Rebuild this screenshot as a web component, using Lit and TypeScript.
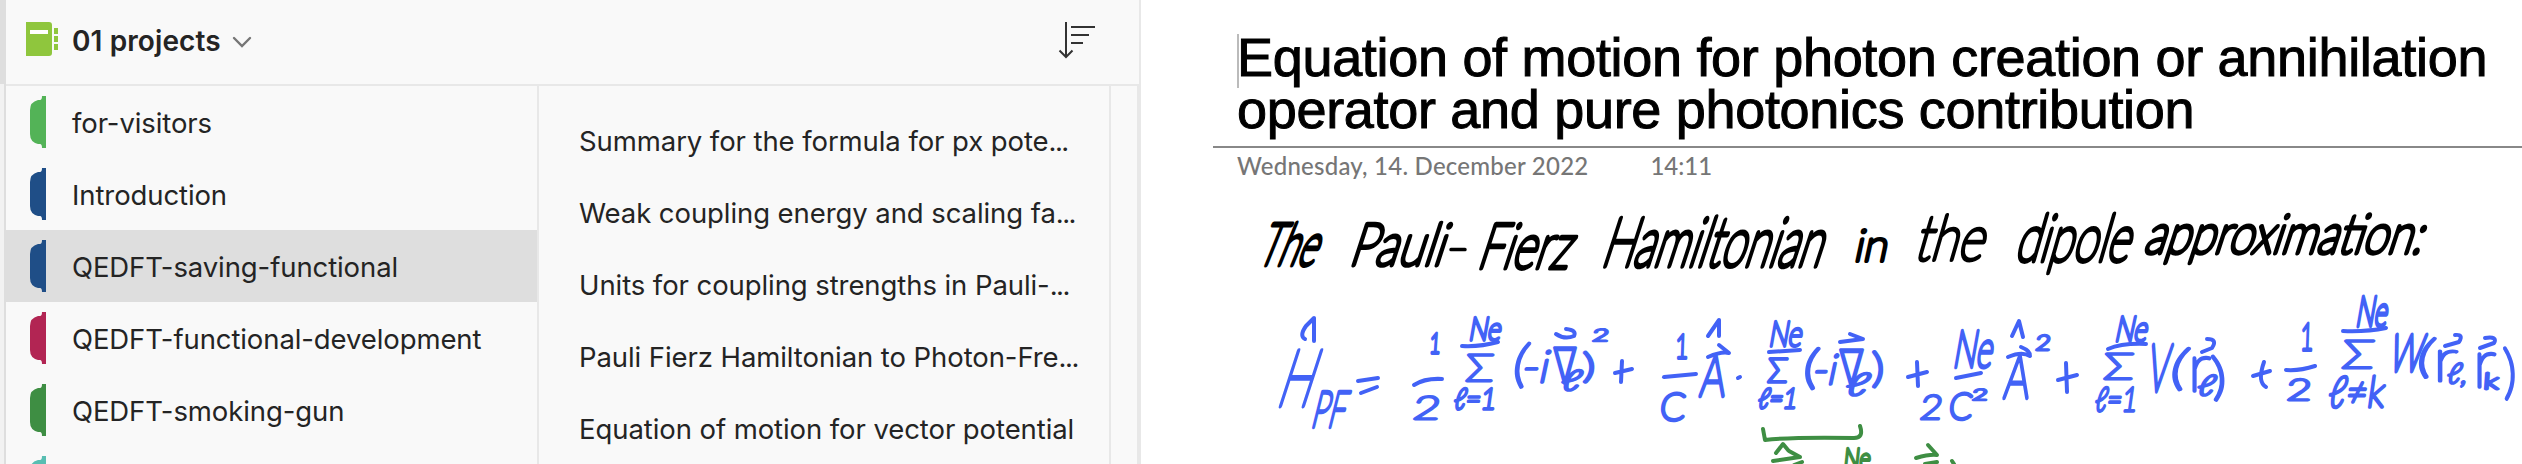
import { LitElement, html, svg, css } from "lit";
import { customElement, property } from "lit/decorators.js";

type Box = [number, number, number, number];
interface Glyph { t: string; box: Box; slant?: number; pen?: number; }

const BLUE: Glyph[] = [
  { t: "H", box: [1275, 349, 1309, 406], slant: 18, pen: 4.8 },
  { t: "PF", box: [1310, 391, 1343, 427], slant: 14, pen: 4.4 },
  { t: "1", box: [1429, 333, 1440, 353], slant: 4, pen: 3.8 },
  { t: "2", box: [1412, 396, 1439, 419], slant: 8 },
  { t: "Ne", box: [1468, 317, 1500, 340], slant: 10, pen: 3.8 },
  { t: "Σ", box: [1465, 354, 1493, 381], slant: 4 },
  { t: "ℓ=1", box: [1453, 388, 1495, 409], slant: 8, pen: 3.4 },
  { t: "(", box: [1511, 345, 1525, 381], slant: 10, pen: 3.6 },
  { t: "-i", box: [1520, 350, 1547, 382], slant: 12, pen: 3.4 },
  { t: "∇", box: [1553, 348, 1577, 383] },
  { t: "ℓ", box: [1560, 370, 1579, 390], slant: 12 },
  { t: ")", box: [1583, 353, 1595, 378], pen: 3.4 },
  { t: "2", box: [1592, 329, 1608, 341], slant: 8, pen: 2.6 },
  { t: "1", box: [1675, 334, 1688, 358], slant: 2, pen: 3.8 },
  { t: "C", box: [1659, 393, 1684, 420], slant: 6, pen: 3.8 },
  { t: "A", box: [1699, 354, 1724, 396], slant: 6, pen: 4.6 },
  { t: "Ne", box: [1768, 321, 1801, 346], slant: 10, pen: 3.8 },
  { t: "Σ", box: [1767, 358, 1787, 382], slant: 4, pen: 3.4 },
  { t: "ℓ=1", box: [1757, 388, 1796, 408], slant: 10, pen: 3.4 },
  { t: "(", box: [1802, 350, 1816, 383], slant: 8, pen: 3.6 },
  { t: "-i", box: [1811, 354, 1835, 384], slant: 12, pen: 3.4 },
  { t: "∇", box: [1839, 350, 1864, 385] },
  { t: "ℓ", box: [1844, 373, 1866, 395], slant: 14 },
  { t: ")", box: [1872, 353, 1884, 382], pen: 3.6 },
  { t: "Ne", box: [1952, 330, 1991, 367], slant: 10, pen: 4.6 },
  { t: "2", box: [1919, 395, 1941, 419], slant: 8, pen: 3.2 },
  { t: "C", box: [1948, 393, 1971, 419], slant: 6, pen: 3.8 },
  { t: "2", box: [1972, 389, 1987, 400], slant: 6, pen: 2.6 },
  { t: "A", box: [2003, 354, 2028, 398], slant: 6, pen: 4.6 },
  { t: "2", box: [2035, 335, 2050, 350], slant: 6 },
  { t: "Ne", box: [2114, 316, 2146, 341], slant: 12, pen: 4 },
  { t: "Σ", box: [2103, 353, 2133, 379], slant: 4 },
  { t: "ℓ=1", box: [2094, 387, 2136, 411], slant: 8, pen: 3.4 },
  { t: "V", box: [2146, 344, 2167, 391], slant: 8, pen: 5.4 },
  { t: "(", box: [2168, 350, 2184, 384], slant: 12, pen: 3.4 },
  { t: "r", box: [2188, 342, 2211, 391], pen: 3.4 },
  { t: "ℓ", box: [2196, 375, 2213, 395], slant: 12 },
  { t: ")", box: [2213, 358, 2227, 394], slant: -4, pen: 3.6 },
  { t: "1", box: [2300, 323, 2313, 350], slant: 2, pen: 4 },
  { t: "2", box: [2286, 379, 2311, 400], slant: 4 },
  { t: "Ne", box: [2355, 296, 2386, 326], slant: 10, pen: 4.8 },
  { t: "Σ", box: [2341, 340, 2373, 368], slant: 6 },
  { t: "ℓ≠k", box: [2327, 376, 2383, 407], slant: 8, pen: 3.6 },
  { t: "W", box: [2388, 334, 2420, 371], slant: 12, pen: 5 },
  { t: "(", box: [2415, 340, 2430, 372], slant: 12, pen: 3.4 },
  { t: "r", box: [2433, 338, 2458, 381] },
  { t: "ℓ,", box: [2446, 363, 2466, 383], slant: 10 },
  { t: "r", box: [2473, 338, 2496, 387], pen: 3.4 },
  { t: "k", box: [2483, 373, 2498, 389], slant: 4 },
  { t: ")", box: [2504, 350, 2517, 392], slant: -2, pen: 3.8 },
];

// Fraction bars, summation bars, hats, arrows and operators.
const BLUE_MARKS = [
  "M1305 339Q1299 336 1306 326L1314 318L1314 341", "M1358 381L1378 378M1361 393L1377 387",
  "M1414 385Q1425 378 1442 379", "M1462 346Q1480 347 1498 342",
  "M1556 334Q1565 340 1574 336Q1577 330 1566 329", "M1615 373L1632 369M1622 361L1621 382",
  "M1664 377L1696 374", "M1708 336L1719 320L1719 336", "M1708 357Q1722 351 1729 353L1719 345",
  "M1738 378L1740 377", "M1769 352L1800 350", "M1840 342L1863 339L1850 334",
  "M1908 377L1927 372M1917 362L1918 386", "M1956 378L1981 373",
  "M2012 336L2019 321L2023 337", "M2008 357Q2022 351 2030 356Q2031 351 2021 347",
  "M2058 380L2077 375M2066 363L2067 392", "M2108 349Q2122 343 2146 344",
  "M2207 339Q2218 339 2212 348L2202 352", "M2253 376L2270 371M2264 362Q2257 382 2266 387",
  "M2286 370Q2300 371 2315 366", "M2343 331Q2366 332 2386 328",
  "M2455 335Q2464 334 2459 342L2445 346", "M2485 338Q2498 336 2494 343L2480 348",
];

const GREEN_MARKS = [
  "M1763 429L1765 440Q1790 437 1854 438Q1864 438 1860 426",
  "M1776 453L1783 444L1788 450", "M1773 461L1800 457L1789 451", "M1794 465L1802 462",
  "M1916 458Q1930 454 1937 455L1928 445", "M1925 464L1937 462", "M1952 461L1954 464",
];

const BLACK: Glyph[] = [
  { t: "The", box: [1256, 223, 1314, 265], slant: 22, pen: 5.2 },
  { t: "Pauli", box: [1348, 223, 1442, 265], slant: 18, pen: 4.8 },
  { t: "-", box: [1446, 222, 1470, 268] },
  { t: "Fierz", box: [1476, 223, 1568, 268], slant: 18, pen: 5 },
  { t: "Hamiltonian", box: [1600, 217, 1820, 266], slant: 18, pen: 5.4 },
  { t: "in", box: [1853, 229, 1886, 261], slant: 12, pen: 4 },
  { t: "the", box: [1913, 215, 1982, 260], slant: 16, pen: 4.2 },
  { t: "dipole", box: [2014, 214, 2128, 261], slant: 16, pen: 5 },
  { t: "approximation:", box: [2143, 214, 2421, 253], slant: 18, pen: 4.8 },
];

function glyphs(list: Glyph[]) {
  return list.map(({ t, box: [x0, y0, x1, y1], slant = 0, pen = 3 }) => svg`
    <text transform="translate(${x0} ${y1}) skewX(${-slant})" font-size=${((y1 - y0) / 0.72).toFixed(1)}
      stroke-width=${pen} textLength=${x1 - x0} lengthAdjust="spacingAndGlyphs">${t}</text>`);
}

@customElement("ink-canvas")
class InkCanvas extends LitElement {
  static styles = css`
    :host { display: block; flex: 1; min-height: 0; }
    svg { display: block; }
    text { font-family: Lato, "DejaVu Sans", sans-serif; font-weight: 100; }
    g { stroke-linecap: round; stroke-linejoin: round; }
    path { fill: none; }
    .black { fill: #000; stroke: #000; }
    .blue { fill: #4262f6; stroke: #4262f6; }
    .green { fill: #3e8e43; stroke: #3e8e43; }
    .blue path, .green path { stroke-width: 4px; }
  `;
  render() {
    return html`<svg width="1381" height="284" viewBox="1141 180 1381 284">
      <g class="black">${glyphs(BLACK)}</g>
      <g class="blue">${glyphs(BLUE)}${BLUE_MARKS.map((d) => svg`<path d=${d}></path>`)}</g>
      <g class="green">${glyphs([{ t: "Ne", box: [1843, 448, 1870, 468], slant: 6, pen: 3.6 }])}
        ${GREEN_MARKS.map((d) => svg`<path d=${d}></path>`)}</g>
    </svg>`;
  }
}

@customElement("section-row")
class SectionRow extends LitElement {
  @property() label = "";
  @property() color = "";
  static styles = css`
    :host { display: flex; align-items: center; height: 72px; padding-left: 24px; gap: 26px; flex: none; }
    :host([selected]) { background: #dedede; }
    svg { display: block; flex: none; }
    .label { font: 400 27.5px/36px Inter, sans-serif; letter-spacing: -0.1px; padding-top: 2px; color: #242424; white-space: nowrap; }
  `;
  render() {
    return html`<svg width="16" height="52" viewBox="0 0 16 52" fill=${this.color}>
        <path d="M12 0H16V52H12Q12 48 10 48H8Q0 46 0 38V14Q0 6 8 4H10Q12 4 12 0Z"></path></svg>
      <span class="label">${this.label}</span>`;
  }
}

@customElement("app-root")
class AppRoot extends LitElement {
  static styles = css`
    :host { display: flex; width: 2522px; height: 464px; overflow: hidden; background: #fff; font-family: Inter, sans-serif; color: #242424; }
    .rail { width: 4px; flex: none; display: flex; flex-direction: column; background: #f2f2f2; border-right: 2px solid #dedede; }
    .rail-top { height: 84px; background: #dedede; }
    .nav { width: 1133px; flex: none; display: flex; flex-direction: column; background: #f9f9f9; border-right: 2px solid #e8e8e8; }
    .header { height: 84px; flex: none; display: flex; align-items: flex-start; border-bottom: 2px solid #e8e8e8; }
    .book { margin: 22px 0 0 20px; }
    .name { font: 600 28px/36px Inter, sans-serif; letter-spacing: 0.1px; margin: 23px 0 0 14px; white-space: nowrap; }
    .chev { margin: 35px 0 0 11px; }
    .sort { margin: 21px 43px 0 auto; }
    .cols { flex: 1; min-height: 0; display: flex; }
    .sections { width: 531px; flex: none; overflow: hidden; border-right: 2px solid #e8e8e8; }
    .pages { width: 570px; flex: none; border-right: 2px solid #e8e8e8; padding-top: 19px; overflow: hidden; }
    .page { height: 72px; display: flex; align-items: center; padding-left: 40px; font-size: 27.5px; line-height: 36px; letter-spacing: -0.08px; white-space: nowrap; }
    .dots { letter-spacing: -1.5px; }
    .gutter { flex: 1; border-right: 2px solid #e8e8e8; }
    .note { flex: 1; min-width: 0; display: flex; flex-direction: column; }
    .title { margin: 31px 0 0 97px; height: 115px; flex: none; font: 400 54px/52px "Liberation Sans", sans-serif; letter-spacing: -0.31px; -webkit-text-stroke: 1px #000; color: #000; display: flex; align-items: flex-start; }
    .caret { width: 2px; height: 54px; margin: 3px -2px 0 -1px; background: #bbb; }
    .line { display: block; white-space: nowrap; width: max-content; }
    .meta { margin-left: 72px; height: 32px; flex: none; border-top: 2px solid #888; display: flex; gap: 62px; padding-left: 24px; font: 500 24px/36px Lato, sans-serif; color: #767676; }
    .date { letter-spacing: 0.23px; }
  `;
  render() {
    const sections = [
      ["for-visitors", "#53b357"], ["Introduction", "#1f4e87"], ["QEDFT-saving-functional", "#1f4e87"],
      ["QEDFT-functional-development", "#b22553"], ["QEDFT-smoking-gun", "#3e8e43"], ["", "#58beb2"],
    ];
    const pages: [string, boolean][] = [
      ["Summary for the formula for px pote", true], ["Weak coupling energy and scaling fa", true],
      ["Units for coupling strengths in Pauli-", true], ["Pauli Fierz Hamiltonian to Photon-Fre", true],
      ["Equation of motion for vector potential", false],
    ];
    return html`
      <div class="rail"><div class="rail-top"></div></div>
      <div class="nav">
        <div class="header">
          <svg class="book" width="32" height="34" viewBox="0 0 32 34"><path fill="#8fc63d" d="M0 0H23Q26 0 26 3V31Q26 34 23 34H0ZM28 6H32V12H28ZM28 14H32V20H28ZM28 22H32V28H28Z"></path><path fill="#fff" d="M4 8H22V12H4Z"></path></svg>
          <span class="name">01 projects</span>
          <svg class="chev" width="20" height="14" viewBox="0 0 20 14"><path d="M2 3L10 11L18 3" fill="none" stroke="#767676" stroke-width="2.4" stroke-linecap="round"></path></svg>
          <svg class="sort" width="38" height="38" viewBox="0 0 38 38"><path d="M8 1V36M1.5 29.5L8 36L14.5 29.5M13 6H37M13 14H31M13 22H25" fill="none" stroke="#333" stroke-width="2"></path></svg>
        </div>
        <div class="cols">
          <div class="sections">${sections.map(([l, c], i) => html`<section-row .label=${l} .color=${c} ?selected=${i === 2}></section-row>`)}</div>
          <div class="pages">${pages.map(([p, cut]) => html`<div class="page"><span>${p}${cut ? html`<span class="dots">...</span>` : ""}</span></div>`)}</div>
          <div class="gutter"></div>
        </div>
      </div>
      <div class="note">
        <div class="title"><div class="caret"></div><div><span class="line">Equation of motion for photon creation or annihilation</span><span class="line">operator and pure photonics contribution</span></div></div>
        <div class="meta"><span class="date">Wednesday, 14. December 2022</span><span>14:11</span></div>
        <ink-canvas></ink-canvas>
      </div>`;
  }
}
